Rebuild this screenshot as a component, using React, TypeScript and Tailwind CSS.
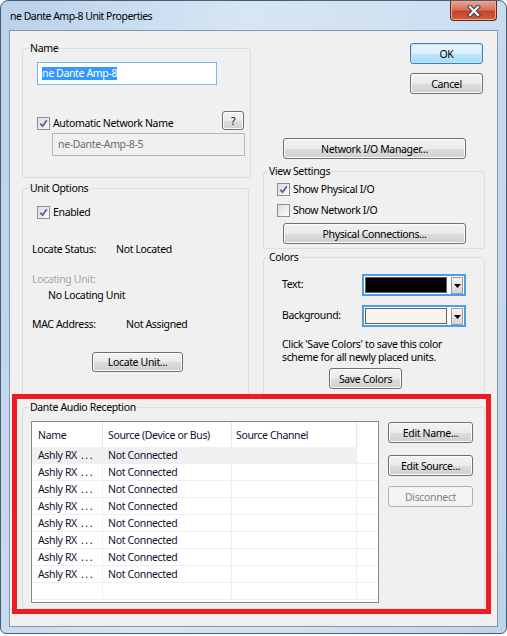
import type { ReactNode } from 'react';

const font = "font-['Segoe_UI','Noto_Sans',sans-serif] text-[10.5px] tracking-[-0.35px]";

const Button = ({
  label,
  className = '',
  primary = false,
  disabled = false,
}: {
  label: string;
  className?: string;
  primary?: boolean;
  disabled?: boolean;
}) => (
  <div
    className={`flex items-center justify-center rounded-[3px] border leading-[14px] ${
      disabled
        ? 'border-[#adb2b5] bg-[#f4f4f4] text-[#838383]'
        : primary
        ? 'border-[#3c7fb1] bg-[linear-gradient(#eaf6fd_0%,#d9f0fc_50%,#bee6fd_51%,#a7d9f5_100%)] text-black shadow-[inset_0_0_0_1px_#c2e7fb]'
        : 'border-[#707070] bg-[linear-gradient(#f2f2f2_0%,#ebebeb_50%,#dddddd_51%,#cfcfcf_100%)] text-black shadow-[inset_0_0_0_1px_#fbfbfb]'
    } ${className}`}
  >
    {label}
  </div>
);

const Check = ({ checked }: { checked: boolean }) => (
  <span className="flex h-[13px] w-[13px] shrink-0 items-center justify-center border border-[#8e8f8f] bg-[linear-gradient(135deg,#dcdcdc,#fbfbfb)]">
    {checked && (
      <svg width="9" height="9" viewBox="0 0 9 9">
        <path d="M1.3 4.6 L3.6 7.2 L7.8 1.2" fill="none" stroke="#4a5f97" strokeWidth="1.7" />
      </svg>
    )}
  </span>
);

const Group = ({
  label,
  className = '',
  labelLeft = 'left-[6px]',
  children,
}: {
  label: string;
  className?: string;
  labelLeft?: string;
  children?: ReactNode;
}) => (
  <div className={`relative flex flex-col rounded-[3px] border border-[#d5dfe5] ${className}`}>
    <span className={`absolute -top-[8px] bg-[#f0f0f0] px-[1px] leading-[14px] ${labelLeft}`}>{label}</span>
    {children}
  </div>
);

const ColorCombo = ({ swatch }: { swatch: string }) => (
  <div className="flex h-[22px] w-[104px] items-start gap-[4px] border-2 border-[#4a9eea] bg-white p-[1px]">
    <div className={`h-[16px] flex-1 border border-[#5f5f5f] ${swatch}`} />
    <div className="flex h-[17px] w-[12px] items-center justify-center border border-[#9c9c9c] bg-[linear-gradient(#f4f4f4,#d4d4d4)]">
      <svg width="7" height="4" viewBox="0 0 7 4">
        <path d="M0 0 H7 L3.5 4 Z" fill="#000" />
      </svg>
    </div>
  </div>
);

const rows = Array.from({ length: 8 }, () => ({ name: 'Ashly RX', source: 'Not Connected' }));

const App = () => {
  return (
    <div className={`relative h-[636px] w-[507px] overflow-hidden bg-white text-black ${font}`}>
      {/* window frame */}
      <div className="flex h-[634px] w-[507px] flex-col rounded-t-[8px] rounded-b-[6px] border border-[#4b5c6f] bg-[linear-gradient(100deg,#b9d1ea_0%,#d7e6f5_40%,#cfe0f2_70%,#bcd4ec_100%)]">
        <div className="flex h-[29px] items-start justify-between">
          <span className="mt-[8px] pl-[9px] leading-[15px] tracking-[-0.5px]">ne Dante Amp-8 Unit Properties</span>
          <div className="mr-[9px] flex h-[20px] w-[47px] items-center justify-center rounded-b-[4px] border border-t-0 border-[#6b2517] bg-[linear-gradient(#e9a698_0%,#d7715c_45%,#c4432b_55%,#d0603f_100%)] shadow-[inset_0_0_0_1px_#eda894]">
            <svg width="14" height="12" viewBox="0 0 14 12">
              <path d="M3 2 L11 10 M11 2 L3 10" stroke="#3d3d3d" strokeWidth="4.2" strokeLinecap="square" />
              <path d="M3 2 L11 10 M11 2 L3 10" stroke="#fff" strokeWidth="2.2" strokeLinecap="square" />
            </svg>
          </div>
        </div>

        {/* client area */}
        <div className="mx-[8px] flex h-[597px] flex-col border border-[#8596aa] bg-[#f0f0f0] pl-[12px]">
          <div className="flex items-start gap-[12px]">
            {/* left column */}
            <div className="flex w-[229px] flex-col">
              <Group label="Name" className="mt-[17px] h-[130px] w-[229px]">
                <div className="ml-[14px] mt-[13px] flex h-[23px] w-[180px] items-center border border-[#7eb4ea] bg-white pl-[4px]">
                  <span className="bg-[#3399ff] leading-[13px] text-white">ne Dante Amp-8</span>
                </div>
                <div className="ml-[14px] mt-[26px] flex h-[19px] w-[207px] items-end justify-between">
                  <div className="flex items-center gap-[3px] leading-[13px]">
                    <Check checked />
                    <span>Automatic Network Name</span>
                  </div>
                  <Button label="?" className="h-[19px] w-[22px]" />
                </div>
                <div className="ml-[29px] mt-[3px] flex h-[23px] w-[193px] items-center border border-[#b5b5b5] bg-[#f0f0f0] pl-[5px] text-[#6d6d6d]">
                  ne-Dante-Amp-8-5
                </div>
              </Group>

              <Group label="Unit Options" className="mt-[10px] h-[210px] w-[227px]">
                <div className="ml-[14px] mt-[17px] flex items-center gap-[3px] leading-[13px]">
                  <Check checked />
                  <span>Enabled</span>
                </div>
                <div className="ml-[9px] mt-[23px] flex leading-[14px]">
                  <span className="w-[84px]">Locate Status:</span>
                  <span>Not Located</span>
                </div>
                <div className="ml-[9px] mt-[16px] leading-[14px] text-[#a8a8a8]">Locating Unit:</div>
                <div className="ml-[25px] mt-[2px] leading-[14px]">No Locating Unit</div>
                <div className="ml-[9px] mt-[15px] flex leading-[14px]">
                  <span className="w-[94px]">MAC Address:</span>
                  <span>Not Assigned</span>
                </div>
                <Button label="Locate Unit..." className="ml-[69px] mt-[21px] h-[20px] w-[91px]" />
              </Group>
            </div>

            {/* right column */}
            <div className="flex w-[222px] flex-col">
              <Button label="OK" primary className="mr-[2px] mt-[12px] h-[21px] w-[73px] self-end" />
              <Button label="Cancel" className="mr-[2px] mt-[9px] h-[21px] w-[73px] self-end" />
              <Button label="Network I/O Manager..." className="ml-[20px] mt-[44px] h-[21px] w-[183px]" />

              <Group label="View Settings" labelLeft="left-[4px]" className="mt-[12px] h-[78px] w-[222px]">
                <div className="ml-[13px] mt-[11px] flex items-center gap-[3px] leading-[13px]">
                  <Check checked />
                  <span>Show Physical I/O</span>
                </div>
                <div className="ml-[13px] mt-[8px] flex items-center gap-[3px] leading-[13px]">
                  <Check checked={false} />
                  <span>Show Network I/O</span>
                </div>
                <Button label="Physical Connections..." className="ml-[19px] mt-[6px] h-[21px] w-[183px]" />
              </Group>

              <Group label="Colors" labelLeft="left-[4px]" className="mt-[8px] h-[141px] w-[222px]">
                <div className="ml-[18px] mt-[16px] flex items-center">
                  <span className="mb-[2px] w-[80px] leading-[14px]">Text:</span>
                  <ColorCombo swatch="bg-black" />
                </div>
                <div className="ml-[18px] mt-[9px] flex items-center">
                  <span className="mb-[2px] w-[80px] leading-[14px]">Background:</span>
                  <ColorCombo swatch="bg-[#f6f4ef]" />
                </div>
                <p className="ml-[18px] mt-[11px] leading-[13px]">
                  Click 'Save Colors' to save this color
                  <br />
                  scheme for all newly placed units.
                </p>
                <Button label="Save Colors" className="ml-[65px] mt-[4px] h-[21px] w-[73px]" />
              </Group>
            </div>
          </div>

          <Group label="Dante Audio Reception" className="mt-[9px] h-[202px] w-[463px]">
            <div className="flex items-start">
              {/* reception list */}
              <div className="ml-[8px] mt-[13px] flex h-[182px] w-[348px] flex-col border border-[#828790] bg-white text-[#10102e]">
                <div className="flex h-[25px] items-center leading-[14px]">
                  <span className="flex h-full w-[71px] items-center border-r border-[#e5e5e5] pl-[6px]">Name</span>
                  <span className="flex h-full w-[129px] items-center border-r border-[#e5e5e5] pl-[5px]">Source (Device or Bus)</span>
                  <span className="flex h-full w-[125px] items-center border-r border-[#e5e5e5] pl-[4px]">Source Channel</span>
                  <span className="h-full flex-1" />
                </div>
                {[...rows, null].map((row, i) => (
                  <div key={i} className="flex h-[17px] leading-[14px]">
                    <span
                      className={`flex w-[71px] items-center border-b border-r border-[#efefef] pl-[6px] ${
                        i === 0 ? 'bg-[#f0f0f0]' : ''
                      }`}
                    >
                      {row && (
                        <>
                          {row.name}
                          <span className="ml-[4px] tracking-[1.6px]">...</span>
                        </>
                      )}
                    </span>
                    <span
                      className={`flex w-[129px] items-center border-b border-r border-[#efefef] pl-[5px] ${
                        i === 0 ? 'bg-[#f0f0f0]' : ''
                      }`}
                    >
                      {row?.source}
                    </span>
                    <span
                      className={`w-[125px] border-b border-r border-[#efefef] ${i === 0 ? 'bg-[#f0f0f0]' : ''}`}
                    />
                    <span className="flex-1 border-b border-[#efefef]" />
                  </div>
                ))}
              </div>

              <div className="ml-[9px] mt-[14px] flex flex-col">
                <Button label="Edit Name..." className="h-[21px] w-[85px]" />
                <Button label="Edit Source..." className="mt-[12px] h-[21px] w-[85px]" />
                <Button label="Disconnect" disabled className="mt-[10px] h-[21px] w-[85px]" />
              </div>
            </div>
          </Group>
        </div>
      </div>

      {/* highlight frame drawn over the reception section */}
      <div className="pointer-events-none absolute left-[12px] top-[394px] h-[220px] w-[479px] border-[5px] border-[#ed1c24]" />
    </div>
  );
};

export default App;
